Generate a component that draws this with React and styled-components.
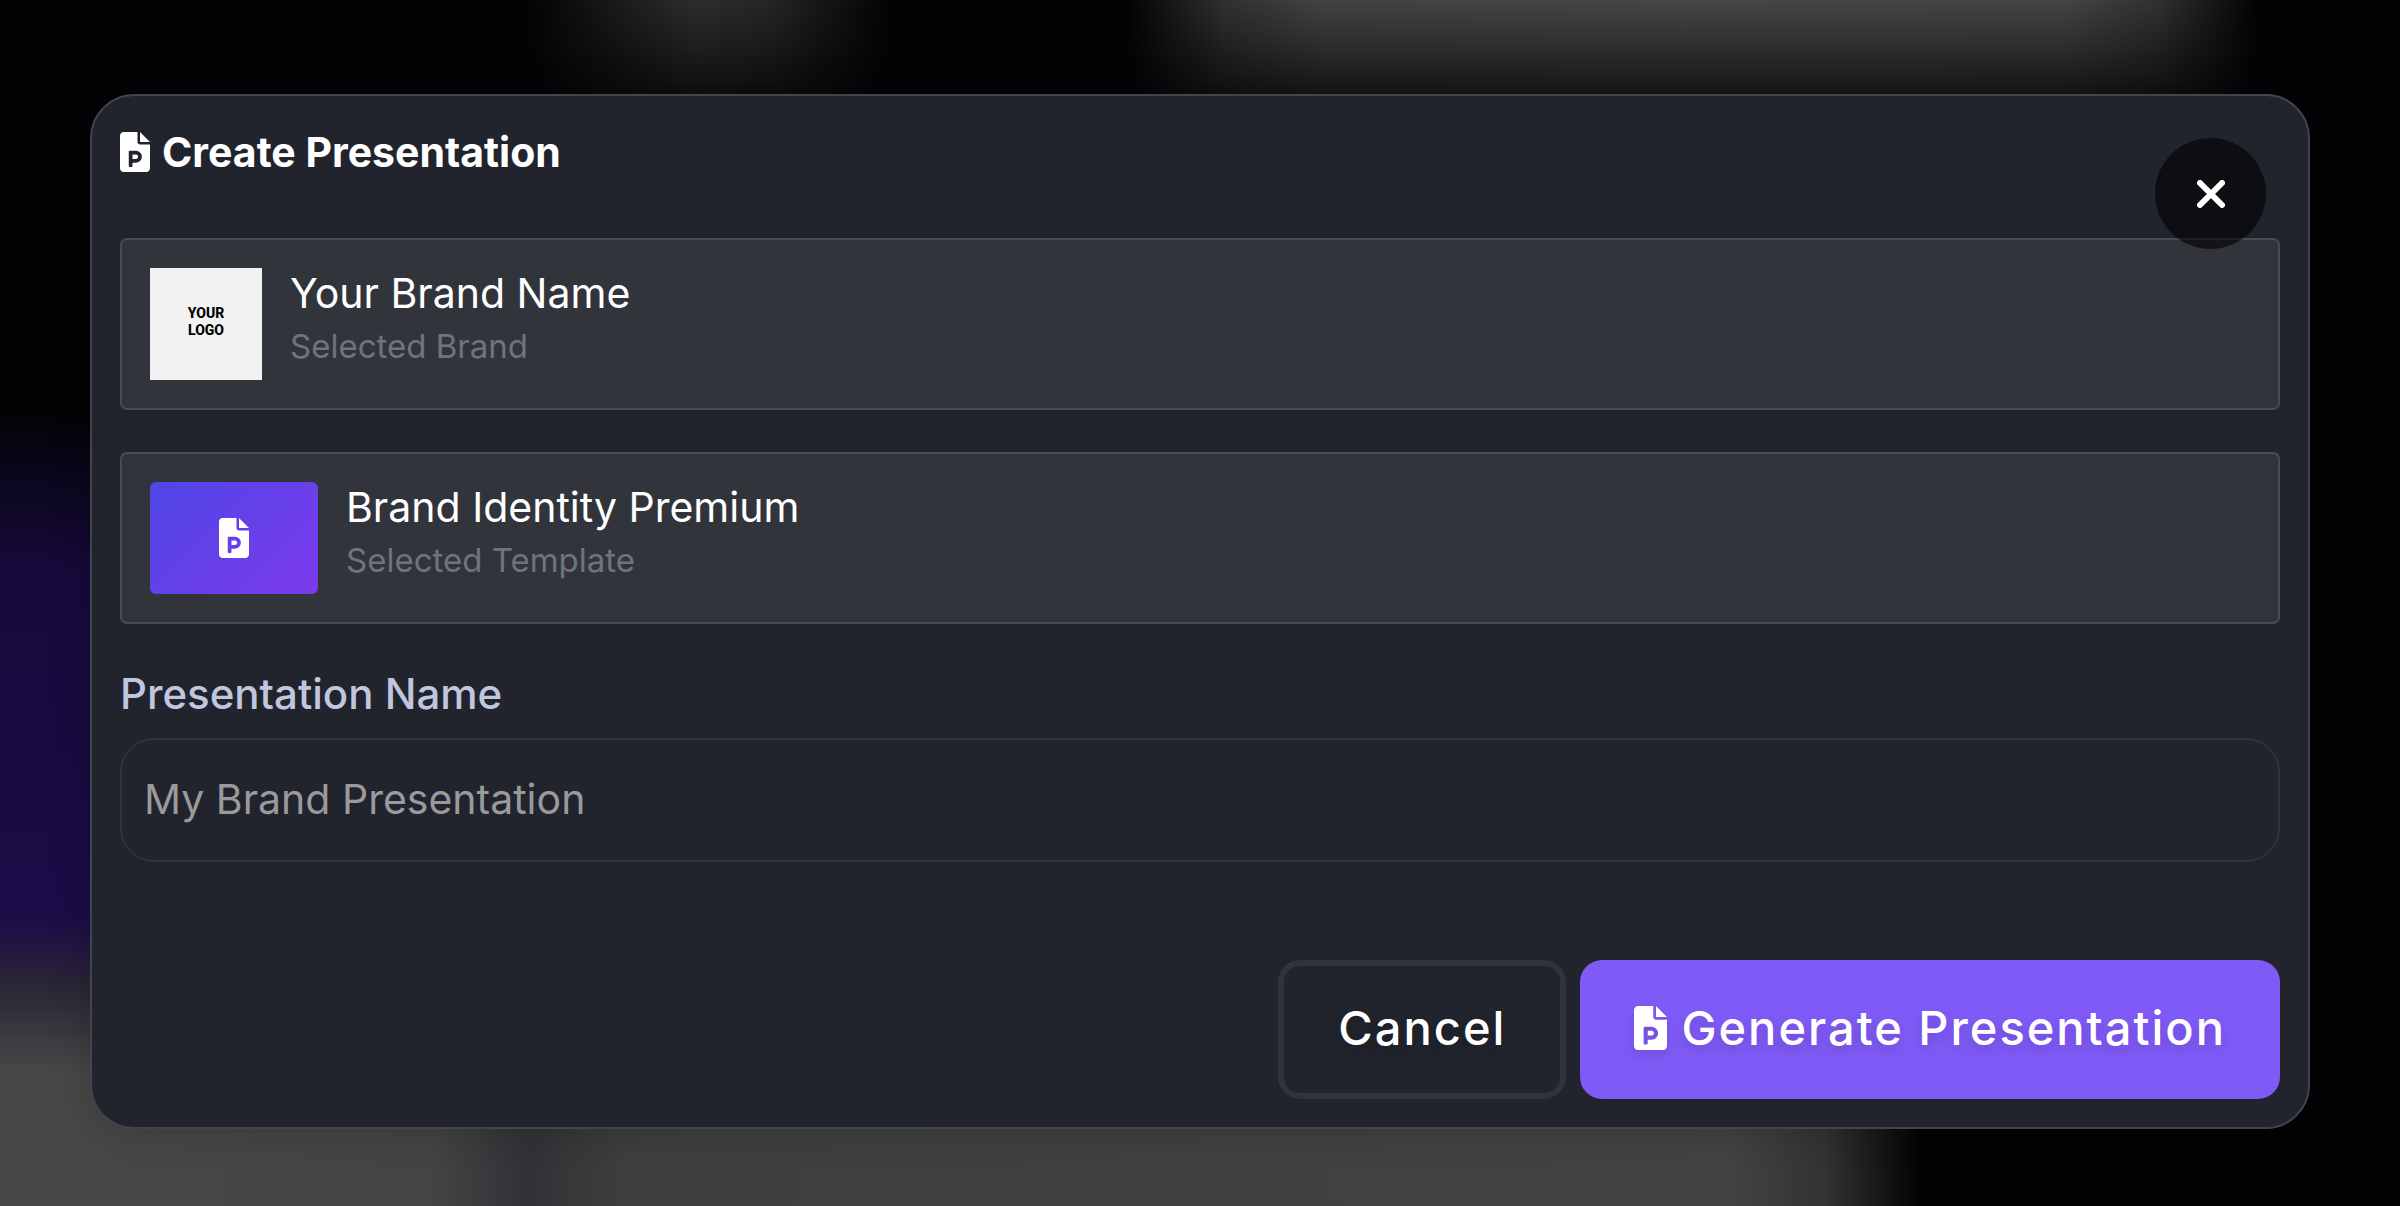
import React from 'react';
import styled, { createGlobalStyle, css } from 'styled-components';

export default function App() {
  return (
    <>
      <GlobalStyle />
      <Backdrop>
        <Modal role="dialog" aria-labelledby="modal-title">
          <CloseBtn type="button" aria-label="Close">
            <svg width="28" height="28" viewBox="0 0 28 28" fill="none">
              <path d="M3 3L25 25M25 3L3 25" stroke="#fff" strokeWidth="6" strokeLinecap="round" />
            </svg>
          </CloseBtn>

          <Title id="modal-title">
            <FileIcon size={40} />
            Create Presentation
          </Title>

          <Card>
            <BrandThumb>
              <LogoLine>YOUR</LogoLine>
              <LogoLine>LOGO</LogoLine>
            </BrandThumb>
            <CardText>
              <CardName>Your Brand Name</CardName>
              <CardHint>Selected Brand</CardHint>
            </CardText>
          </Card>

          <Card>
            <TemplateThumb>
              <FileIcon size={40} />
            </TemplateThumb>
            <CardText>
              <CardName>Brand Identity Premium</CardName>
              <CardHint>Selected Template</CardHint>
            </CardText>
          </Card>

          <Label htmlFor="presentation-name">Presentation Name</Label>
          <Input id="presentation-name" type="text" placeholder="My Brand Presentation" />

          <Footer>
            <Button type="button">Cancel</Button>
            <Button type="button" $primary>
              <FileIcon size={44} />
              Generate Presentation
            </Button>
          </Footer>
        </Modal>
      </Backdrop>
    </>
  );
}

const FileIcon = ({ size }) => (
  <Icon $size={size} viewBox="0 0 384 512" fill="currentColor" aria-hidden="true">
    <path d="M256 0v128h128L256 0zM224 128V0H48C21.49 0 0 21.49 0 48v416C0 490.5 21.49 512 48 512h288c26.51 0 48-21.49 48-48V160h-127.1C238.3 160 224 145.7 224 128zM279.6 308.1C284.2 353.5 248.5 392 204 392H160v40C160 440.8 152.8 448 144 448H128c-8.836 0-16-7.164-16-16V256c0-8.836 7.164-16 16-16h71.51C239.3 240 275.6 268.5 279.6 308.1zM160 344h44c15.44 0 28-12.56 28-28S219.4 288 204 288H160V344z" />
  </Icon>
);

const GlobalStyle = createGlobalStyle`
  * {
    box-sizing: border-box;
  }

  body {
    margin: 0;
    background: #030305;
    font-family: Inter, 'Liberation Sans', sans-serif;
  }
`;

const Icon = styled.svg`
  flex: none;
  width: ${({ $size }) => ($size * 3) / 4}px;
  height: ${({ $size }) => $size}px;
`;

// blurred page behind the dialog
const Backdrop = styled.div`
  min-height: 100vh;
  padding: 94px 90px 77px;
  background:
    linear-gradient(180deg, transparent, rgba(3, 3, 5, 0.7)) 0 0 / 100% 94px no-repeat,
    linear-gradient(90deg, transparent 22%, #1c1c1c 26%, #2d2d2d 29%, #262626 32%, transparent 37%) 0 0 / 100% 130px no-repeat,
    linear-gradient(90deg, transparent 47%, #303030 51%, #424242 55%, #464646 70%, #444444 86%, #303030 90%, transparent 94%) 0 0 / 100% 130px no-repeat,
    linear-gradient(90deg, #484848 0%, #444444 18%, #303236 22%, #3d3f3d 26%, #434342 72%, #333333 76%, transparent 80%) 0 100% / 100% 130px no-repeat,
    linear-gradient(180deg, transparent 34%, #160a3a 47%, #1c0c48 76%, #2b2735 82%, #484848 89%) 0 0 / 150px 100% no-repeat,
    #030305;
`;

const Modal = styled.div`
  position: relative;
  display: flex;
  flex-direction: column;
  padding: 28px;
  border: 2px solid #43454c;
  border-radius: 44px;
  background: #21242d;
  box-shadow: 0 0 40px rgba(0, 0, 0, 0.2);
`;

const CloseBtn = styled.button`
  position: absolute;
  top: 42px;
  right: 42px;
  display: flex;
  align-items: center;
  justify-content: center;
  width: 111px;
  height: 111px;
  padding: 0;
  border: 0;
  border-radius: 50%;
  background: rgba(0, 0, 0, 0.6);
  cursor: pointer;
`;

const Title = styled.h1`
  display: flex;
  align-items: center;
  gap: 12px;
  margin: 0 0 58px;
  font-size: 41px;
  font-weight: 700;
  line-height: 56px;
  color: #fff;
`;

const Card = styled.div`
  display: flex;
  gap: 28px;
  margin-bottom: 42px;
  padding: 28px;
  border: 2px solid #4a4c54;
  border-radius: 7px;
  background: #32343c;
`;

const BrandThumb = styled.div`
  display: flex;
  flex-direction: column;
  align-items: center;
  justify-content: center;
  width: 112px;
  height: 112px;
  padding-bottom: 4px;
  background: #f2f2f2;
`;

const LogoLine = styled.div`
  font-family: Roboto, sans-serif;
  font-size: 14px;
  font-weight: 800;
  line-height: 17px;
  color: #000;
`;

const TemplateThumb = styled.div`
  display: flex;
  align-items: center;
  justify-content: center;
  width: 168px;
  height: 112px;
  border-radius: 6px;
  background: linear-gradient(135deg, #4f46e5, #7c3aed);
  color: #fff;
`;

const CardText = styled.div`
  display: flex;
  flex-direction: column;
`;

const CardName = styled.div`
  font-size: 41px;
  line-height: 50px;
  color: #fff;
`;

const CardHint = styled.div`
  font-size: 33px;
  line-height: 56px;
  color: #6c757d;
`;

const Label = styled.label`
  margin-bottom: 16px;
  font-size: 42px;
  font-weight: 500;
  line-height: 56px;
  color: #c0c6de;
`;

const Input = styled.input`
  width: 100%;
  height: 124px;
  padding: 0 22px 2px;
  border: 2px solid #30333b;
  border-radius: 34px;
  background: transparent;
  font-family: inherit;
  font-size: 41px;
  color: #fff;

  &::placeholder {
    color: #9a9a9c;
  }
`;

const Footer = styled.div`
  display: flex;
  justify-content: flex-end;
  gap: 14px;
  margin-top: 98px;
`;

const Button = styled.button`
  display: flex;
  align-items: center;
  justify-content: center;
  gap: 14px;
  height: 139px;
  padding: 0 54px 4px;
  border: 6px solid #30333b;
  border-radius: 22px;
  background: transparent;
  font-family: inherit;
  font-size: 47px;
  font-weight: 500;
  letter-spacing: 2px;
  color: #fff;
  text-shadow: 0 6px 12px rgba(0, 0, 0, 0.15);
  cursor: pointer;

  ${({ $primary }) =>
    $primary &&
    css`
      border: 0;
      background: #7f5af6;

      svg {
        filter: drop-shadow(0 6px 6px rgba(0, 0, 0, 0.1));
      }
    `}
`;
